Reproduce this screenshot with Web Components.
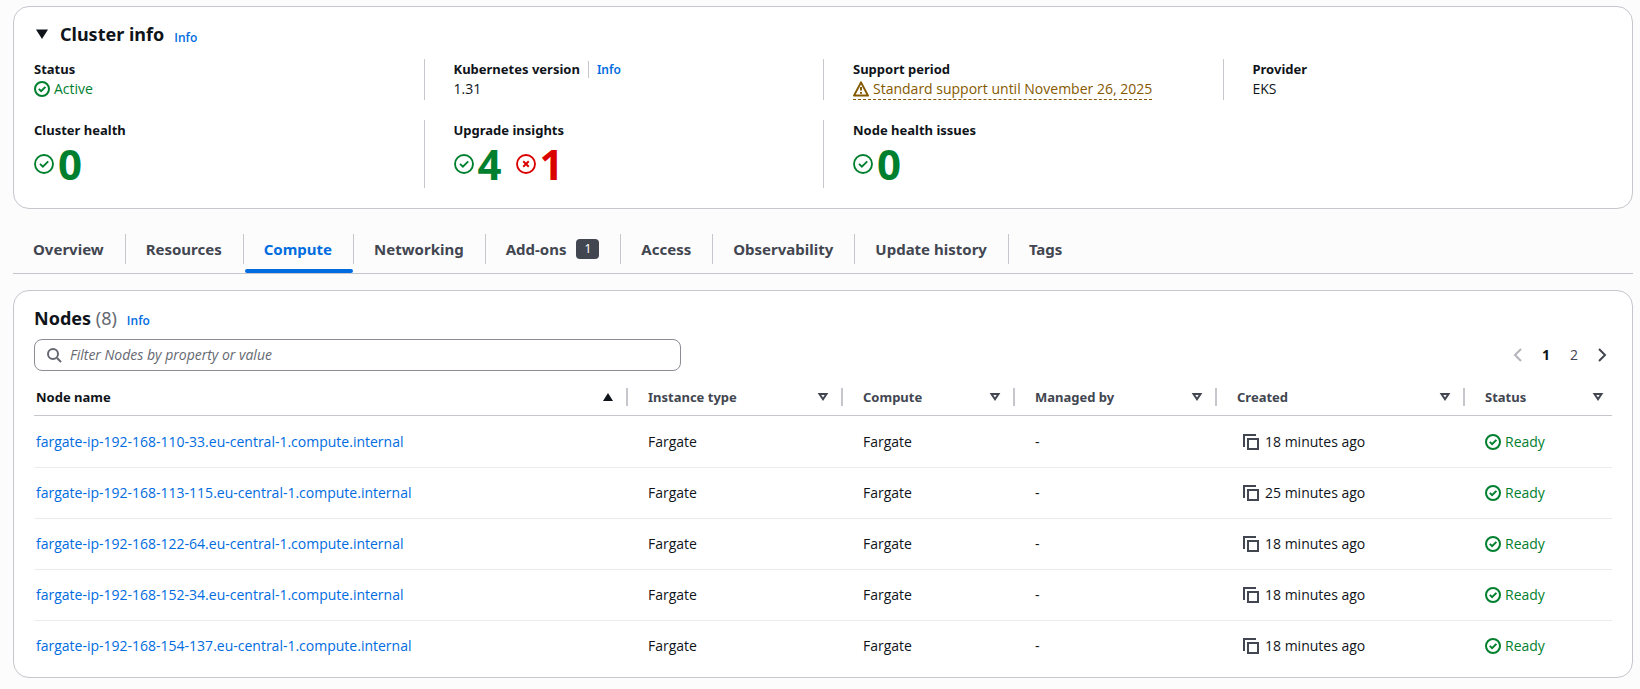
<!DOCTYPE html>
<html lang="en">
<head>
<meta charset="utf-8">
<meta name="viewport" content="width=device-width, initial-scale=1">
<title>Cluster</title>
<style>
    body {
        margin: 0;
        padding: 6px 7px 10px 13px;
        background-color: #fcfcfd;
        color: #0f141a;
        font: 14px/20px "Open Sans", "Noto Sans", sans-serif;

        --heading-font: "Noto Sans", "Open Sans", sans-serif;
        --link: #006ce0;
        --success: #00802f;
        --error: #db0000;
        --warning: #855900;
        --divider: #c6c6cd;
        --muted: #424650;
    }
    main {
        display: flex;
        flex-direction: column;
        gap: 16px;
    }
</style>
</head>
<body>
<main>
    <cluster-info></cluster-info>
    <tab-bar>
        <tab-item>Overview</tab-item>
        <tab-item>Resources</tab-item>
        <tab-item active>Compute</tab-item>
        <tab-item>Networking</tab-item>
        <tab-item badge="1">Add-ons</tab-item>
        <tab-item>Access</tab-item>
        <tab-item>Observability</tab-item>
        <tab-item>Update history</tab-item>
        <tab-item>Tags</tab-item>
    </tab-bar>
    <nodes-panel></nodes-panel>
</main>

<script>
class BaseElement extends HTMLElement{

    connectedCallback() {
        if(this.shadowRoot) return;
        this.attachShadow({ mode: 'open' });
        const template = document.createElement("template")
        template.innerHTML = this.getMarkup();
        this.shadowRoot.appendChild(template.content.cloneNode(true));
    }
}

// Shapes are on a 16 x 16 grid
const icons = {
    "success": `<circle cx="8" cy="8" r="7"/><path d="m4.8 7.9 2.3 2.3 4.3-4.3"/>`,
    "error": `<circle cx="8" cy="8" r="7"/><path d="m10.2 5.8-4.4 4.4M5.8 5.8l4.4 4.4"/>`,
    "warning": `<path d="M8 1.4 15 14.6H1Z" stroke-linejoin="round"/><path d="M8 6v3.6M8 11v1.8"/>`,
    "search": `<circle cx="7" cy="7" r="5"/><path d="m11 11 4 4"/>`,
    "copy": `<path d="M1 13V1h12"/><path d="M5 5h10v10H5z"/>`,
    "angle-left": `<path d="M11 2 5 8l6 6"/>`,
    "angle-right": `<path d="m5 2 6 6-6 6"/>`,
    "expanded": `<path class="fill" d="M2 3.5h12L8 13z"/>`,
    "sort-asc": `<path class="fill" d="M3 12h10L8 4z"/>`,
    "sort": `<path d="M4.5 5h7L8 10.3z"/>`
}

class UiIcon extends BaseElement{

    getMarkup(){
        return `
            <style>
                :host {
                    display: inline-flex;
                    flex: none;
                    width: 16px;
                    height: 16px;
                }
                :host([size="large"]) {
                    width: 20px;
                    height: 20px;
                }
                svg {
                    width: 100%;
                    height: 100%;
                    fill: none;
                    stroke: currentColor;
                    stroke-width: 2;
                }
                :host([size="large"]) svg { stroke-width: 1.5; }
                :host([size="large"]) circle { r: 7.2px; }
                .fill {
                    fill: currentColor;
                    stroke: none;
                }
            </style>
            <svg viewBox="0 0 16 16" aria-hidden="true">${icons[this.getAttribute("name")]}</svg>
            `;
    }
}

class InfoLink extends BaseElement{

    getMarkup(){
        return `
            <style>
                :host {
                    display: inline-block;
                    line-height: 16px;
                }
                a {
                    color: var(--link);
                    font-size: 12px;
                    font-weight: 600;
                    text-decoration: none;
                }
            </style>
            <a href="#info">Info</a>
            `;
    }
}

// Icon followed by a coloured text
class StatusText extends BaseElement{

    getMarkup(){
        const type = this.getAttribute("type");
        const size = this.hasAttribute("large") ? "large" : "normal";
        return `
            <style>
                :host {
                    display: inline-flex;
                    align-items: center;
                    gap: 4px;
                    color: var(--${type});
                }
                :host([large]) {
                    font-size: 42px;
                    line-height: 48px;
                    font-weight: 700;
                }
                :host([hint]) { border-bottom: 1px dashed; }
            </style>
            <ui-icon name="${type}" size="${size}"></ui-icon>
            <slot></slot>
            `;
    }
}

class PanelBox extends BaseElement{

    getMarkup(){
        return `
            <style>
                :host {
                    display: block;
                    padding: 12px 20px 5px;
                    background-color: #ffffff;
                    border: 1px solid var(--divider);
                    border-radius: 16px;
                }
                header {
                    display: flex;
                    align-items: baseline;
                    gap: 10px;
                    line-height: 30px;
                }
            </style>
            <header>
                <slot name="title"></slot>
                <info-link></info-link>
            </header>
            <slot></slot>
            `;
    }
}

class KeyValue extends BaseElement{

    getMarkup(){
        return `
            <style>
                :host {
                    display: block;
                    padding: 0 10px 0 29px;
                    border-left: 1px solid var(--divider);
                }
                :host([first]) {
                    padding-left: 10px;
                    border-left: 0;
                }
                .label {
                    display: flex;
                    align-items: center;
                    gap: 8px;
                    font: 700 13px/20px var(--heading-font);
                }
                info-link {
                    padding-left: 8px;
                    border-left: 1px solid var(--divider);
                }
                .value {
                    display: flex;
                    gap: 14px;
                }
            </style>
            <div class="label">${this.getAttribute("label")}${this.hasAttribute("info") ? "<info-link></info-link>" : ""}</div>
            <div class="value"><slot></slot></div>
            `;
    }
}

class ClusterInfo extends BaseElement{

    getMarkup(){
        return `
            <style>
                :host { display: block; }
                h2 {
                    margin: 0;
                    font: 700 18px/30px var(--heading-font);
                }
                button {
                    display: flex;
                    align-items: center;
                    gap: 10px;
                    padding: 0;
                    border: 0;
                    background: none;
                    color: inherit;
                    font: inherit;
                }
                .grid {
                    display: grid;
                    grid-template-columns: repeat(4, 1fr);
                    gap: 20px 0;
                    margin: 10px -10px 15px;
                }
            </style>
            <panel-box>
                <h2 slot="title"><button aria-expanded="true"><ui-icon name="expanded"></ui-icon>Cluster info</button></h2>
                <div class="grid">
                    <key-value label="Status" first><status-text type="success">Active</status-text></key-value>
                    <key-value label="Kubernetes version" info>1.31</key-value>
                    <key-value label="Support period"><status-text type="warning" hint>Standard support until November 26, 2025</status-text></key-value>
                    <key-value label="Provider">EKS</key-value>
                    <key-value label="Cluster health" first><status-text type="success" large>0</status-text></key-value>
                    <key-value label="Upgrade insights">
                        <status-text type="success" large>4</status-text>
                        <status-text type="error" large>1</status-text>
                    </key-value>
                    <key-value label="Node health issues"><status-text type="success" large>0</status-text></key-value>
                </div>
            </panel-box>
            `;
    }
}

class TabItem extends BaseElement{

    getMarkup(){
        const badge = this.getAttribute("badge");
        return `
            <style>
                :host {
                    display: flex;
                    align-items: center;
                }
                .tab {
                    display: flex;
                    flex-direction: column;
                }
                button {
                    display: flex;
                    align-items: center;
                    gap: 10px;
                    height: 44px;
                    padding: 4px 21px 0 20px;
                    border: 0;
                    background: none;
                    color: var(--muted);
                    font: 700 15px/20px var(--heading-font);
                }
                .line {
                    height: 4px;
                    margin-left: 1px;
                    border-radius: 2px;
                }
                :host([active]) button { color: var(--link); }
                :host([active]) .line { background-color: var(--link); }
                :host::after {
                    content: "";
                    height: 30px;
                    border-right: 1px solid var(--divider);
                }
                :host(:last-of-type)::after { display: none; }
                .badge {
                    padding: 0 8px;
                    border-radius: 4px;
                    background-color: var(--muted);
                    color: #ffffff;
                    font-size: 12px;
                    font-weight: 400;
                }
            </style>
            <div class="tab">
                <button role="tab" aria-selected="${this.hasAttribute("active")}"><slot></slot>${badge ? `<span class="badge">${badge}</span>` : ""}</button>
                <div class="line"></div>
            </div>
            `;
    }
}

class TabBar extends BaseElement{

    getMarkup(){
        return `
            <style>
                :host { display: block; }
                div {
                    display: flex;
                    border-bottom: 1px solid var(--divider);
                }
            </style>
            <div role="tablist"><slot></slot></div>
            `;
    }
}

class TextFilter extends BaseElement{

    getMarkup(){
        return `
            <style>
                :host { display: block; }
                label {
                    display: flex;
                    align-items: center;
                    gap: 8px;
                    box-sizing: border-box;
                    height: 32px;
                    padding: 0 11px;
                    border: 1px solid #8c8c94;
                    border-radius: 8px;
                    color: #656871;
                }
                input {
                    flex: 1;
                    min-width: 0;
                    padding: 0;
                    border: 0;
                    outline: 0;
                    background: none;
                    color: inherit;
                    font: inherit;
                }
                input::placeholder {
                    color: #656871;
                    font-style: italic;
                }
            </style>
            <label>
                <ui-icon name="search"></ui-icon>
                <input type="search" aria-label="Filter Nodes" placeholder="Filter Nodes by property or value">
            </label>
            `;
    }
}

class PageNumbers extends BaseElement{

    getMarkup(){
        return `
            <style>
                :host {
                    display: flex;
                    align-items: center;
                    gap: 8px;
                }
                button {
                    display: flex;
                    justify-content: center;
                    min-width: 20px;
                    padding: 0;
                    border: 0;
                    background: none;
                    color: var(--muted);
                    font: inherit;
                }
                button:disabled { color: #b4b4bb; }
                [aria-current] {
                    color: #0f141a;
                    font-weight: 700;
                }
            </style>
            <button disabled aria-label="Previous page"><ui-icon name="angle-left"></ui-icon></button>
            <button aria-current="true">1</button>
            <button>2</button>
            <button aria-label="Next page"><ui-icon name="angle-right"></ui-icon></button>
            `;
    }
}

const columns = ["Node name", "Instance type", "Compute", "Managed by", "Created", "Status"];

const nodes = [
    { name: "fargate-ip-192-168-110-33.eu-central-1.compute.internal", created: "18 minutes ago" },
    { name: "fargate-ip-192-168-113-115.eu-central-1.compute.internal", created: "25 minutes ago" },
    { name: "fargate-ip-192-168-122-64.eu-central-1.compute.internal", created: "18 minutes ago" },
    { name: "fargate-ip-192-168-152-34.eu-central-1.compute.internal", created: "18 minutes ago" },
    { name: "fargate-ip-192-168-154-137.eu-central-1.compute.internal", created: "18 minutes ago" }
];

class NodesTable extends BaseElement{

    getMarkup(){
        return `
            <style>
                :host { display: block; }
                table {
                    width: 100%;
                    table-layout: fixed;
                    border-collapse: separate;
                    border-spacing: 0;
                }
                .type { width: 215px; }
                .compute { width: 172px; }
                .manager { width: 202px; }
                .created { width: 248px; }
                .status { width: 147px; }
                th, td {
                    box-sizing: border-box;
                    padding: 0 0 0 20px;
                    text-align: left;
                }
                th:first-child, td:first-child { padding-left: 2px; }
                th {
                    height: 37px;
                    border-bottom: 1px solid var(--divider);
                    color: var(--muted);
                    font: 700 13px/20px var(--heading-font);
                }
                th:first-child { color: #0f141a; }
                th button {
                    display: flex;
                    align-items: center;
                    justify-content: space-between;
                    box-sizing: border-box;
                    width: 100%;
                    height: 18px;
                    padding: 0 10px 0 0;
                    border: 0;
                    border-right: 2px solid var(--divider);
                    background: none;
                    color: inherit;
                    font: inherit;
                }
                th:last-child button {
                    border: 0;
                    padding-right: 6px;
                }
                td {
                    height: 51px;
                    border-bottom: 1px solid #ebebf0;
                }
                tr:first-child td { height: 52px; }
                tr:last-child td { border-bottom-color: transparent; }
                td status-text { display: flex; }
                a {
                    color: var(--link);
                    text-decoration: none;
                }
                .copy {
                    display: flex;
                    align-items: center;
                    gap: 6px;
                    padding-left: 6px;
                }
                .copy button {
                    display: flex;
                    padding: 0;
                    border: 0;
                    background: none;
                    color: var(--muted);
                }
            </style>
            <table>
                <colgroup>
                    <col><col class="type"><col class="compute"><col class="manager"><col class="created"><col class="status">
                </colgroup>
                <thead><tr>
                    ${columns.map((name, i) => `<th scope="col"><button>${name}<ui-icon name="${i === 0 ? "sort-asc" : "sort"}"></ui-icon></button></th>`).join("")}
                </tr></thead>
                <tbody>
                    ${nodes.map(node => `<tr>
                        <td><a href="#${node.name}">${node.name}</a></td>
                        <td>Fargate</td>
                        <td>Fargate</td>
                        <td>-</td>
                        <td><div class="copy"><button aria-label="Copy"><ui-icon name="copy"></ui-icon></button>${node.created}</div></td>
                        <td><status-text type="success">Ready</status-text></td>
                    </tr>`).join("")}
                </tbody>
            </table>
            `;
    }
}

class NodesPanel extends BaseElement{

    getMarkup(){
        return `
            <style>
                :host { display: block; }
                h2 {
                    margin: 0;
                    font: 700 18px/30px var(--heading-font);
                }
                h2 span {
                    color: #656871;
                    font-weight: 400;
                }
                .tools {
                    display: flex;
                    justify-content: space-between;
                    margin: 6px 0 8px;
                }
                text-filter { width: 41%; }
            </style>
            <panel-box>
                <h2 slot="title">Nodes <span>(8)</span></h2>
                <div class="tools">
                    <text-filter></text-filter>
                    <page-numbers></page-numbers>
                </div>
                <nodes-table></nodes-table>
            </panel-box>
            `;
    }
}

customElements.define("ui-icon", UiIcon);
customElements.define("info-link", InfoLink);
customElements.define("status-text", StatusText);
customElements.define("panel-box", PanelBox);
customElements.define("key-value", KeyValue);
customElements.define("cluster-info", ClusterInfo);
customElements.define("tab-item", TabItem);
customElements.define("tab-bar", TabBar);
customElements.define("text-filter", TextFilter);
customElements.define("page-numbers", PageNumbers);
customElements.define("nodes-table", NodesTable);
customElements.define("nodes-panel", NodesPanel);
</script>
</body>
</html>
